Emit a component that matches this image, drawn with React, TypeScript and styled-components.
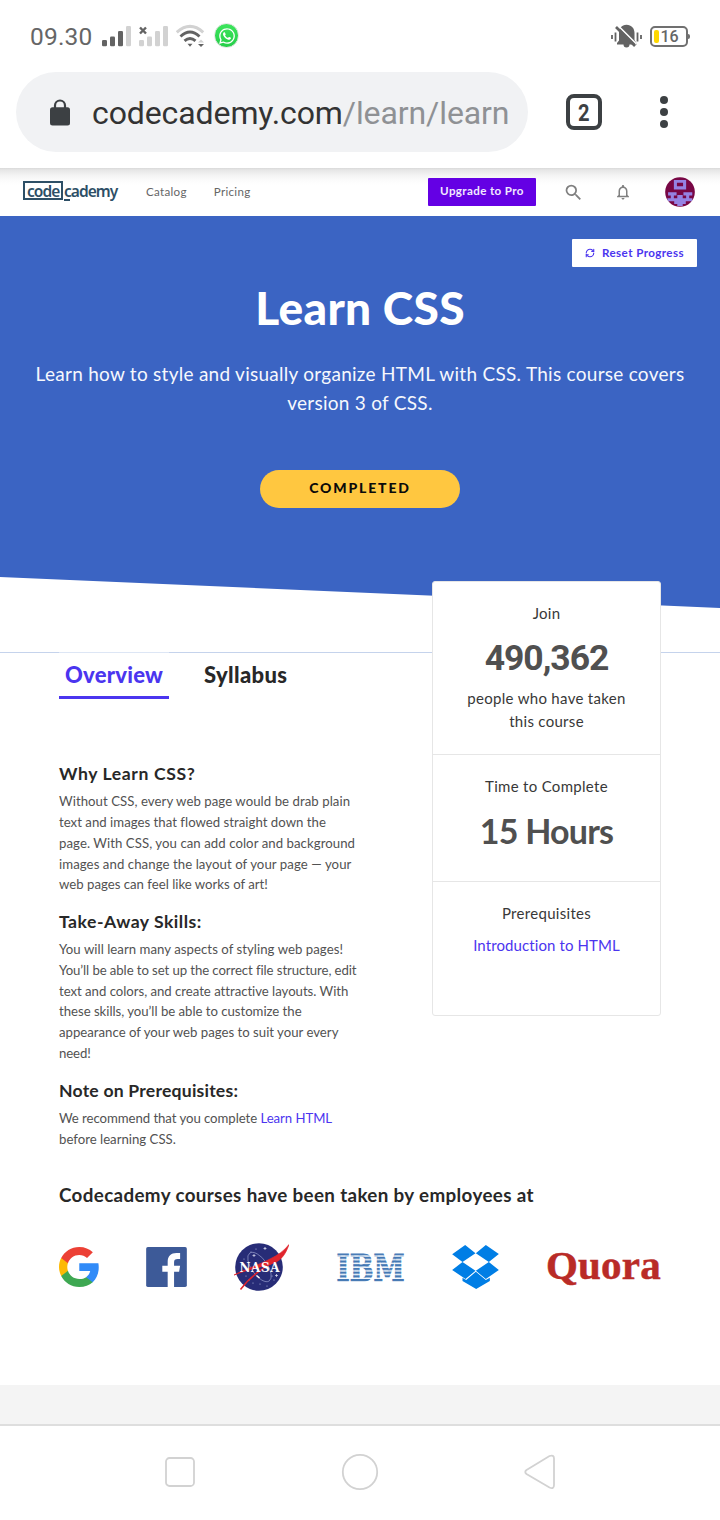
import React from 'react';
import styled, { createGlobalStyle } from 'styled-components';
import { FaWhatsapp } from 'react-icons/fa';
import { MdSearch, MdNotificationsNone } from 'react-icons/md';
import { RefreshCw } from 'lucide-react';

const GlobalStyle = createGlobalStyle`
  * { box-sizing: border-box; }
  body { margin: 0; background: #fff; font-family: Lato, "Open Sans", sans-serif; color: #282828; }
  svg { display: block; flex: none; }
  h1, h2, h3, p { margin: 0; }
`;

const Screen = styled.div`
  width: 720px;
  height: 1520px;
  display: flex;
  flex-direction: column;
  overflow: hidden;
  background: #fff;
`;

/* ---------- phone status bar ---------- */

const StatusBar = styled.div`
  height: 72px;
  padding: 0 30px;
  display: flex;
  align-items: center;
  justify-content: space-between;
  font-family: Roboto, sans-serif;
  color: #666;
`;

const StatusGroup = styled.div<{ $gap: number }>`
  display: flex;
  align-items: center;
  gap: ${(p) => p.$gap}px;
`;

const Clock = styled.span`
  font-size: 24.5px;
  line-height: 28px;
  width: 64px;
  padding-top: 1px;
  letter-spacing: 0.2px;
`;

const ChatBadge = styled.span`
  display: flex;
  align-items: center;
  justify-content: center;
  width: 25px;
  height: 25px;
  margin: -1px 0 0;
  border-radius: 50%;
  border: 1px solid #e2e6e2;
  background: linear-gradient(#3de55c, #25cf49);
  color: #fff;
`;

const Battery = styled.span`
  position: relative;
  display: flex;
  align-items: center;
  width: 38px;
  height: 21px;
  margin-right: 2px;
  padding-left: 2px;
  border: 2px solid #707070;
  border-radius: 5px;
  font: 500 16px/17px Roboto, sans-serif;
  color: #666;
  gap: 1.5px;

  &::before {
    content: '';
    width: 5px;
    height: 13px;
    border-radius: 2px;
    background: #ffd800;
  }
  &::after {
    content: '';
    position: absolute;
    right: -4px;
    top: 6px;
    width: 2px;
    height: 5px;
    border-radius: 0 2px 2px 0;
    background: #707070;
  }
`;

/* ---------- browser bar ---------- */

const BrowserBar = styled.div`
  height: 96px;
  padding: 0 16px 16px;
  display: flex;
  align-items: center;
`;

const AddressPill = styled.div`
  width: 512px;
  height: 80px;
  border-radius: 40px;
  padding-left: 34px;
  display: flex;
  align-items: center;
  background: #f1f2f4;
  color: #3c4043;
`;

const Address = styled.span`
  margin: 2px 0 0 22px;
  font: 400 32px/40px Roboto, sans-serif;
  letter-spacing: -0.1px;
  color: #333;
  white-space: nowrap;
`;

const AddressPath = styled.span`
  color: #8f9194;
`;

const TabCount = styled.div`
  width: 36px;
  height: 36px;
  margin-left: 38px;
  border: 4px solid #3c4043;
  border-radius: 8px;
  display: flex;
  align-items: center;
  justify-content: center;
  font: 700 24px/28px Roboto, sans-serif;
  color: #3c4043;

  span {
    padding-top: 1px;
    transform: scaleX(0.84);
  }
`;

const MenuDots = styled.div`
  margin-left: 58px;
  display: flex;
  flex-direction: column;
  gap: 4px;

  i {
    width: 8px;
    height: 8px;
    border-radius: 50%;
    background: #3c4043;
  }
`;

/* ---------- site header ---------- */

const SiteHeader = styled.header`
  height: 48px;
  padding: 0 25px 0 23px;
  display: flex;
  align-items: center;
  background: linear-gradient(#d9d9d9 0, #e6e6e6 2px, #f3f3f3 7px, #fcfcfc 13px, #fff 17px);
`;

const Brand = styled.div`
  display: flex;
  align-items: center;
  height: 20px;
  width: 96px;
  margin-bottom: 3px;
  font: 600 15.5px/16px "Noto Sans", sans-serif;
  letter-spacing: -0.95px;
  color: #2d4f66;
`;

const BrandBox = styled.span`
  height: 19.5px;
  width: 40px;
  padding-left: 2px;
  border: 2px solid #2d4f66;
`;

const BrandRest = styled.span`
  position: relative;
  margin-left: 1px;

  &::after {
    content: '';
    position: absolute;
    left: 0;
    bottom: -2px;
    width: 6px;
    height: 1.5px;
    background: #2d4f66;
  }
`;

const NavLink = styled.a<{ $left: number }>`
  margin: -1px 0 0 ${(p) => p.$left}px;
  font-size: 11.6px;
  line-height: 14px;
  letter-spacing: 0.3px;
  color: #666;
`;

const UpgradeButton = styled.button`
  width: 108px;
  height: 28px;
  margin-left: auto;
  padding: 0 0 2px;
  border: 0;
  border-radius: 1px;
  background: #6400e4;
  color: #f1e8ff;
  font: 700 11.6px/14px Lato, sans-serif;
  letter-spacing: 0.38px;
`;

const HeaderIcon = styled.span<{ $left: number }>`
  margin-left: ${(p) => p.$left}px;
  color: #808080;
`;

/* ---------- hero ---------- */

const Hero = styled.section`
  height: 392px;
  padding-top: 23px;
  display: flex;
  flex-direction: column;
  align-items: center;
  background: #3b64c3;
  color: #fff;
  text-align: center;
  clip-path: polygon(0 0, 100% 0, 100% 100%, 0 361px);
`;

const ResetButton = styled.button`
  align-self: flex-end;
  display: flex;
  align-items: center;
  gap: 7px;
  width: 125px;
  height: 28px;
  margin-right: 23px;
  padding: 0 0 0 13px;
  border: 0;
  border-radius: 1px;
  background: #fff;
  color: #4b35ef;
  font: 700 11.6px/14px Lato, sans-serif;
  letter-spacing: 0.42px;
  white-space: nowrap;
`;

const HeroTitle = styled.h1`
  margin-top: 12px;
  font-size: 46px;
  font-weight: 900;
  line-height: 58px;
  letter-spacing: 0.35px;
`;

const HeroText = styled.p`
  margin-top: 22px;
  font-size: 19px;
  line-height: 29px;
  letter-spacing: 0.27px;
  color: #f6f8fd;
`;

const CompletedButton = styled.button`
  width: 200px;
  height: 38px;
  margin-top: 53px;
  padding: 0 0 2px;
  border: 0;
  border-radius: 19px;
  background: #ffc740;
  color: #0a0a0a;
  font: 900 14px/20px Lato, sans-serif;
  letter-spacing: 1.85px;
`;

/* ---------- course body ---------- */

const CourseBody = styled.main`
  position: relative;
  height: 519px;
  margin-top: 44px;
  padding: 0 59px;
  border-top: 1px solid #c5d3ec;
  display: flex;
  justify-content: space-between;
  align-items: flex-start;
`;

const Details = styled.div`
  width: 330px;
`;

const Tabs = styled.nav`
  display: flex;
  gap: 35px;
  margin-top: -1px;
`;

const Tab = styled.a<{ $active?: boolean }>`
  height: 47px;
  padding: ${(p) => (p.$active ? '8px 6px 0' : '9px 0 0')};
  border-top: ${(p) => (p.$active ? '1px solid #dde6f5' : '0')};
  border-bottom: ${(p) => (p.$active ? '3px solid #4b35ef' : '0')};
  color: ${(p) => (p.$active ? '#4b35ef' : '#282828')};
  font-size: 22px;
  font-weight: 900;
  line-height: 28px;
  letter-spacing: ${(p) => (p.$active ? 0.24 : 0.34)}px;
`;

const Topics = styled.div`
  padding-top: 63px;
  display: flex;
  flex-direction: column;
  gap: 15px;
`;

const TopicTitle = styled.h3<{ $track: number }>`
  font-size: 17.6px;
  font-weight: 700;
  line-height: 24px;
  letter-spacing: ${(p) => p.$track}px;
`;

const TopicText = styled.p`
  margin-top: 5.4px;
  font-size: 13.2px;
  line-height: 20.7px;
  color: #525252;
`;

const Line = styled.span<{ $track?: number }>`
  display: block;
  white-space: nowrap;
  letter-spacing: ${(p) => p.$track ?? 0}px;
`;

const InlineLink = styled.a`
  color: #4b35ef;
`;

const StatsCard = styled.aside`
  width: 229px;
  height: 435px;
  margin-top: -72px;
  border: 1px solid #e6e6e6;
  border-radius: 3px;
  background: #fff;
  text-align: center;
  font-size: 15px;
  line-height: 23px;
  letter-spacing: 0.3px;
  color: #383838;
`;

const Stat = styled.section<{ $height: number }>`
  height: ${(p) => p.$height}px;
  padding-top: 20px;

  & + & {
    border-top: 1px solid #e6e6e6;
  }
`;

const StatValue = styled.p<{ $family: string; $size: number; $track: number }>`
  margin: 11px 0 7px;
  font-family: ${(p) => p.$family}, sans-serif;
  font-size: ${(p) => p.$size}px;
  font-weight: 700;
  line-height: 44px;
  letter-spacing: ${(p) => p.$track}px;
  color: #505050;
`;

const Prerequisite = styled.a`
  display: block;
  margin-top: 9px;
  letter-spacing: 0.1px;
  color: #4b35ef;
`;

/* ---------- employers ---------- */

const Employers = styled.section`
  height: 214px;
  padding: 11px 59px 0;
`;

const EmployersTitle = styled.h2`
  font-size: 18.8px;
  font-weight: 700;
  line-height: 26px;
  letter-spacing: 0.36px;
  white-space: nowrap;
`;

const LogoRow = styled.div`
  height: 56px;
  margin-top: 31px;
  display: flex;
  align-items: center;
  justify-content: space-between;
`;

const QuoraMark = styled.span`
  width: 116px;
  margin: -4px -1px 0 0;
  font: 700 41px/44px "Liberation Serif", serif;
  letter-spacing: 0.2px;
  color: #b92b27;
  -webkit-text-stroke: 0.5px #b92b27;
`;

const PageFooter = styled.footer`
  height: 41px;
  background: #f4f4f4;
  border-bottom: 2px solid #dedede;
`;

const PhoneNav = styled.nav`
  height: 94px;
  padding: 0 164px 2px;
  display: flex;
  align-items: center;
  justify-content: space-between;
`;

/* ---------- drawings ---------- */

const Signal = ({ lit, crossed }: { lit: number; crossed?: boolean }) => (
  <svg width="29" height="21" viewBox="0 0 29 21">
    {[14, 10.5, 5, 0].map((y, i) => (
      <rect key={y} x={i * 8} y={y} width="5" height={20.3 - y} rx="1.3" fill={i < lit ? '#636363' : '#d2d2d2'} />
    ))}
    {crossed && <path d="M1 1.5l6 6M7 1.5l-6 6" stroke="#636363" strokeWidth="2.4" />}
  </svg>
);

const Wifi = () => (
  <svg width="30" height="24" viewBox="0 0 30 24" fill="none">
    <path d="M.8 8.300Q14 -3.500 27.200 8.300" stroke="#d2d2d2" strokeWidth="3" />
    <path d="M4.500 12.500Q14 3.500 23.500 12.500" stroke="#636363" strokeWidth="2.900" />
    <path d="M8.500 16.800Q14 12 19.500 16.800" stroke="#636363" strokeWidth="2.900" />
    <path d="M11.500 19.800h5l-2.500 3z" fill="#636363" />
    <path d="M22 18.500h6l-3-3z" fill="#d2d2d2" />
    <path d="M22 20h6l-3 3z" fill="#636363" />
  </svg>
);

const SilentBell = () => (
  <svg width="31" height="25" viewBox="0 0 31 25">
    <path d="M15.500 .8c5 0 8 3.600 8 8.200v7l2.200 3.600v1H18.500a3 3 0 0 1-6 0H6v-1.600l2-2.500V9c0-4.600 2.500-8.200 7.500-8.200z" fill="#636363" />
    <path d="M6.500 1l19 19" stroke="#fff" strokeWidth="1.600" />
    <path d="M5 3l19 19" stroke="#636363" strokeWidth="2.600" />
    <path d="M1 11v4M4.500 8.500v9M26.500 8.500v9M30 11v4" stroke="#636363" strokeWidth="1.800" />
  </svg>
);

const Lock = () => (
  <svg width="20" height="27" viewBox="0 0 20 27">
    <path d="M5 9V6.500a5 5 0 0 1 10 0V9" fill="none" stroke="#3c4043" strokeWidth="2.200" />
    <rect y="8.300" width="20" height="18.200" rx="2.500" fill="#3c4043" />
  </svg>
);

const Avatar = () => (
  <svg width="30" height="30" viewBox="0 0 88 88">
    <clipPath id="avatar"><circle cx="44" cy="44" r="43.5" /></clipPath>
    <g clipPath="url(#avatar)">
      <rect width="88" height="88" fill="#780745" />
      <g fill="#9583e4">
        <path fillRule="evenodd" d="M26 9h36v28H26zM35 17v10h18V17z" />
        <path d="M9 45h25v9h-8v8h10v-9h16v9h10v-8h-8v-9h26v9h-9v8h9v9H61v8h-9v6H36v-6h-9v-8H7v-9h10v-8H9z" />
      </g>
    </g>
  </svg>
);

const GoogleMark = () => (
  <svg width="40" height="40" viewBox="1 1 21.700 22" preserveAspectRatio="none">
    <path fill="#318bf8" d="M22.560 12.250c0-.78-.07-1.530-.2-2.250H12v4.260h5.920c-.26 1.370-1.040 2.530-2.210 3.310v2.770h3.570c2.080-1.920 3.280-4.740 3.280-8.090z" />
    <path fill="#3ea852" d="M12 23c2.970 0 5.460-.98 7.280-2.660l-3.570-2.770c-.98.66-2.230 1.060-3.710 1.060-2.860 0-5.290-1.930-6.160-4.530H2.180v2.840C3.990 20.530 7.700 23 12 23z" />
    <path fill="#fdb905" d="M5.840 14.090c-.22-.66-.35-1.360-.35-2.090s.13-1.430.35-2.090V7.070H2.180C1.430 8.550 1 10.220 1 12s.43 3.450 1.180 4.930l2.850-2.220.81-.62z" />
    <path fill="#ec4035" d="M12 5.380c1.620 0 3.060.56 4.210 1.640l3.150-3.150C17.450 2.090 14.970 1 12 1 7.700 1 3.990 3.470 2.180 7.070l3.660 2.840c.87-2.600 3.300-4.530 6.160-4.530z" />
  </svg>
);

const FacebookMark = () => (
  <svg width="41" height="40" viewBox="0 0 121 119">
    <rect width="121" height="119" rx="5" fill="#3d5a98" />
    <path fill="#fff" d="M64 119V74H48V56h16V44c0-17 10-26 26-26h11v18h-7c-8 0-11 3-11 10v10h18l-3 18H83v45z" />
  </svg>
);

const stars = [[17, 9], [31, 5], [38, 33], [12, 33], [19, 40], [41, 21], [10, 16], [26, 41], [33, 43], [22, 6], [15, 37], [40, 37]];

const NasaMark = () => (
  <svg width="55" height="48" viewBox="0 0 55 48">
    <circle cx="25" cy="24" r="23.800" fill="#272c77" />
    {stars.map(([x, y]) => <circle key={`${x}-${y}`} cx={x} cy={y} r="0.600" fill="#b5badf" />)}
    <path d="M31 4v3M29.500 5.500h3M20 11v3M18.500 12.500h3M42.500 31v3M41 32.500h3" stroke="#dfe2f4" strokeWidth=".7" />
    <ellipse cx="25.500" cy="24" rx="8" ry="17" transform="rotate(-35 25.500 24)" fill="none" stroke="#8d94c6" strokeWidth=".7" />
    <path fill="#e0242c" stroke="#e0242c" strokeWidth=".7" d="M0 32C14 25 27 21 36 16C44 12 50 8 55 1.500C51 13 46 18.500 37 21C24 25 12 27 0 32z" />
    <path fill="none" stroke="#e0242c" strokeWidth="1.500" d="M6.500 46.500C15 35 27 25.500 43 17" />
    <text x="5.500" y="28.800" textLength="40" lengthAdjust="spacing" fontFamily="DejaVu Serif, serif" fontWeight="700" fontSize="12" fill="#fff">NASA</text>
    <path d="M22.500 32.500l3 2.500" stroke="#fff" strokeWidth="1.500" />
  </svg>
);

const IbmMark = () => (
  <svg width="69" height="48" viewBox="0 -10 69 48">
    <defs>
      <pattern id="ibmBars" width="80" height="3.720" patternUnits="userSpaceOnUse">
        <rect width="80" height="2.250" fill="#4478b4" />
      </pattern>
    </defs>
    <text x="0.5" y="27.500" textLength="68" lengthAdjust="spacingAndGlyphs" fontFamily="DejaVu Serif, serif" fontWeight="700" fontSize="37" fill="url(#ibmBars)" stroke="url(#ibmBars)" strokeWidth="1.200">IBM</text>
  </svg>
);

const DropboxMark = () => (
  <svg width="47" height="44" viewBox="0 0 140 132" fill="#007ee5">
    <path d="M0 28L39 0l31 25-39 26zM101 0l39 27-30 24-39-26zM0 75l31-24 39 26-30 25zM140 75l-30-24-39 26 30 25z" />
    <path d="M71 80l30 25 12-7v10l-41 24-41-24V98l11 7z" />
  </svg>
);

export default function App() {
  return (
    <Screen>
      <GlobalStyle />
      <StatusBar>
        <StatusGroup $gap={8}>
          <Clock>09.30</Clock>
          <Signal lit={3} />
          <Signal lit={0} crossed />
          <Wifi />
          <ChatBadge><FaWhatsapp size={18} /></ChatBadge>
        </StatusGroup>
        <StatusGroup $gap={8}>
          <SilentBell />
          <Battery>16</Battery>
        </StatusGroup>
      </StatusBar>

      <BrowserBar>
        <AddressPill>
          <Lock />
          <Address>codecademy.com<AddressPath>/learn/learn</AddressPath></Address>
        </AddressPill>
        <TabCount><span>2</span></TabCount>
        <MenuDots><i /><i /><i /></MenuDots>
      </BrowserBar>

      <SiteHeader>
        <Brand>
          <BrandBox>code</BrandBox>
          <BrandRest>cademy</BrandRest>
        </Brand>
        <NavLink $left={27}>Catalog</NavLink>
        <NavLink $left={27}>Pricing</NavLink>
        <UpgradeButton>Upgrade to Pro</UpgradeButton>
        <HeaderIcon $left={27}><MdSearch size={21} /></HeaderIcon>
        <HeaderIcon $left={30}><MdNotificationsNone size={18} /></HeaderIcon>
        <HeaderIcon $left={33}><Avatar /></HeaderIcon>
      </SiteHeader>

      <Hero>
        <ResetButton><RefreshCw size={10} strokeWidth={2.6} />Reset Progress</ResetButton>
        <HeroTitle>Learn CSS</HeroTitle>
        <HeroText>
          Learn how to style and visually organize HTML with CSS. This course covers
          <br />
          version 3 of CSS.
        </HeroText>
        <CompletedButton>COMPLETED</CompletedButton>
      </Hero>

      <CourseBody>
        <Details>
          <Tabs>
            <Tab $active>Overview</Tab>
            <Tab>Syllabus</Tab>
          </Tabs>
          <Topics>
            <section>
              <TopicTitle $track={0.6}>Why Learn CSS?</TopicTitle>
              <TopicText>
                <Line $track={0.055}>Without CSS, every web page would be drab plain</Line>
                <Line $track={0.02}>text and images that flowed straight down the</Line>
                <Line $track={0.06}>page. With CSS, you can add color and background</Line>
                <Line $track={0.07}>images and change the layout of your page — your</Line>
                <Line>web pages can feel like works of art!</Line>
              </TopicText>
            </section>
            <section>
              <TopicTitle $track={0.5}>Take-Away Skills:</TopicTitle>
              <TopicText>
                <Line $track={0.04}>You will learn many aspects of styling web pages!</Line>
                <Line $track={-0.09}>You’ll be able to set up the correct file structure, edit</Line>
                <Line $track={-0.03}>text and colors, and create attractive layouts. With</Line>
                <Line $track={-0.03}>these skills, you’ll be able to customize the</Line>
                <Line>appearance of your web pages to suit your every</Line>
                <Line $track={-0.1}>need!</Line>
              </TopicText>
            </section>
            <section>
              <TopicTitle $track={0.21}>Note on Prerequisites:</TopicTitle>
              <TopicText>
                <Line $track={-0.06}>We recommend that you complete <InlineLink>Learn HTML</InlineLink></Line>
                <Line>before learning CSS.</Line>
              </TopicText>
            </section>
          </Topics>
        </Details>

        <StatsCard>
          <Stat $height={172}>
            Join
            <StatValue $family="Roboto" $size={35.5} $track={-1.05}>490,362</StatValue>
            people who have taken
            <br />
            this course
          </Stat>
          <Stat $height={127}>
            Time to Complete
            <StatValue $family="Lato" $size={34} $track={-0.8}>15 Hours</StatValue>
          </Stat>
          <Stat $height={134}>
            Prerequisites
            <Prerequisite>Introduction to HTML</Prerequisite>
          </Stat>
        </StatsCard>
      </CourseBody>

      <Employers>
        <EmployersTitle>Codecademy courses have been taken by employees at</EmployersTitle>
        <LogoRow>
          <GoogleMark />
          <FacebookMark />
          <NasaMark />
          <IbmMark />
          <DropboxMark />
          <QuoraMark>Quora</QuoraMark>
        </LogoRow>
      </Employers>

      <PageFooter />
      <PhoneNav>
        <svg width="32" height="32" viewBox="0 0 32 32" fill="none" stroke="#d2d2d2" strokeWidth="1.800">
          <rect x="2" y="2" width="28" height="28" rx="3.500" />
        </svg>
        <svg width="38" height="38" viewBox="0 0 38 38" fill="none" stroke="#d2d2d2" strokeWidth="1.800">
          <circle cx="19" cy="19" r="17.200" />
        </svg>
        <svg width="32" height="36" viewBox="0 0 32 36" fill="none" stroke="#d2d2d2" strokeWidth="1.800">
          <path d="M2.500 16L25.500 2Q30 .5 30 4.500V31Q30 35.500 25.500 33.500L2.500 20Q0 18 2.500 16z" />
        </svg>
      </PhoneNav>
    </Screen>
  );
}
